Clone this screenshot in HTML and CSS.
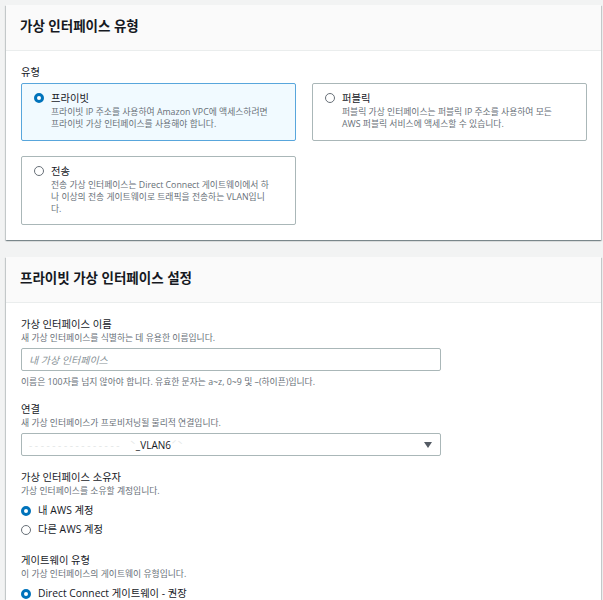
FILE: index.html
```html
<!DOCTYPE html>
<html lang="ko">
<head>
<meta charset="utf-8">
<title>가상 인터페이스</title>
<link rel="stylesheet" href="styles.css">
</head>
<body>
<div class="page">
  <section class="card">
    <div class="card-header"><h2>가상 인터페이스 유형</h2></div>
    <div class="card-body">
      <div class="label">유형</div>
      <div class="tiles">
        <div class="tile selected">
          <span class="radio on"></span>
          <div class="tile-text">
            <div class="tile-title">프라이빗</div>
            <div class="tile-desc">프라이빗 IP 주소를 사용하여 Amazon VPC에 액세스하려면<br>프라이빗 가상 인터페이스를 사용해야 합니다.</div>
          </div>
        </div>
        <div class="tile">
          <span class="radio"></span>
          <div class="tile-text">
            <div class="tile-title">퍼블릭</div>
            <div class="tile-desc">퍼블릭 가상 인터페이스는 퍼블릭 IP 주소를 사용하여 모든<br>AWS 퍼블릭 서비스에 액세스할 수 있습니다.</div>
          </div>
        </div>
        <div class="tile">
          <span class="radio"></span>
          <div class="tile-text">
            <div class="tile-title">전송</div>
            <div class="tile-desc">전송 가상 인터페이스는 Direct Connect 게이트웨이에서 하<br>나 이상의 전송 게이트웨이로 트래픽을 전송하는 VLAN입니<br>다.</div>
          </div>
        </div>
      </div>
    </div>
  </section>

  <section class="card">
    <div class="card-header"><h2>프라이빗 가상 인터페이스 설정</h2></div>
    <div class="card-body">
      <div class="field">
        <div class="label">가상 인터페이스 이름</div>
        <div class="desc">새 가상 인터페이스를 식별하는 데 유용한 이름입니다.</div>
        <div class="input"><span class="placeholder">내 가상 인터페이스</span></div>
        <div class="hint">이름은 100자를 넘지 않아야 합니다. 유효한 문자는 a~z, 0~9 및 –(하이픈)입니다.</div>
      </div>
      <div class="field">
        <div class="label">연결</div>
        <div class="desc">새 가상 인터페이스가 프로비저닝될 물리적 연결입니다.</div>
        <div class="select">
          <span class="value"><span class="masked">- - - - - - - - - - - - - - - -    ˋ</span>_VLAN6<span class="masked">ˊˋ</span></span>
          <span class="caret"></span>
        </div>
      </div>
      <div class="field">
        <div class="label">가상 인터페이스 소유자</div>
        <div class="desc">가상 인터페이스를 소유할 계정입니다.</div>
        <div class="options">
          <div class="option"><span class="radio on"></span>내 AWS 계정</div>
          <div class="option"><span class="radio"></span>다른 AWS 계정</div>
        </div>
      </div>
      <div class="field">
        <div class="label">게이트웨이 유형</div>
        <div class="desc">이 가상 인터페이스의 게이트웨이 유형입니다.</div>
        <div class="options">
          <div class="option"><span class="radio on"></span><span>Direct Connect 게이트웨이 - <em class="rec">권장</em></span></div>
        </div>
      </div>
    </div>
  </section>
</div>
</body>
</html>
```

FILE: styles.css
```css
html, body {
  margin: 0;
  padding: 0;
  background: #f2f3f3;
}
body {
  font-family: "Open Sans", "Noto Sans CJK KR", sans-serif;
  color: #16191f;
}
.page {
  padding: 5px 2px 0 6px;
  display: flex;
  flex-direction: column;
  gap: 17px;
}
.card {
  background: #fff;
  box-shadow: 0 1px 1px 0 rgba(0, 28, 36, .3), 1px 1px 1px 0 rgba(0, 28, 36, .15), -1px 1px 1px 0 rgba(0, 28, 36, .15);
}
.card-header {
  background: #fafafa;
  border-bottom: 1px solid #eaeded;
  padding: 12px 14px 15px;
}
.card-header h2 {
  margin: 0;
  font-size: 13.5px;
  line-height: 18px;
  font-weight: 700;
}
.card-body {
  padding: 14px 14px 15px 15px;
}
.label {
  font-size: 10.3px;
  line-height: 15px;
}
.desc, .hint {
  font-size: 8.8px;
  line-height: 12px;
  color: #687078;
}
.tiles {
  margin-top: 3px;
  display: grid;
  grid-template-columns: 275px 275px;
  column-gap: 16px;
  row-gap: 15px;
}
.tile {
  border: 1px solid #aab7b8;
  border-radius: 2px;
  padding: 6px 10px 9px 12px;
  display: flex;
  gap: 7px;
  align-items: flex-start;
}
.tile.selected {
  border-color: #58a6dc;
  background: #f1faff;
}
.tile .radio {
  margin-top: 3px;
}
.tile-title {
  font-size: 10.3px;
  line-height: 16px;
}
.tile-desc {
  font-size: 8.8px;
  line-height: 12.3px;
  color: #687078;
}
.radio {
  width: 10px;
  height: 10px;
  box-sizing: border-box;
  border-radius: 50%;
  border: 1px solid #687078;
  background: #fff;
  flex: none;
  display: inline-block;
}
.radio.on {
  border: 3px solid #0073bb;
}
.field {
  margin-bottom: 14px;
}
.input, .select {
  margin-top: 4px;
  width: 420px;
  height: 23px;
  box-sizing: border-box;
  border: 1px solid #aab7b8;
  border-radius: 2px;
  display: flex;
  align-items: center;
  padding: 0 7px;
}
.input {
  margin-bottom: 5px;
}
.placeholder {
  font-style: italic;
  font-size: 10px;
  color: #879196;
}
.select {
  justify-content: space-between;
}
.value {
  font-size: 10px;
  color: #16191f;
  white-space: pre;
}
.masked {
  color: #e3e6e6;
}
.caret {
  width: 0;
  height: 0;
  border-left: 4px solid transparent;
  border-right: 4px solid transparent;
  border-top: 6px solid #545b64;
  margin-right: 1px;
}
.options {
  margin-top: 4px;
}
.option {
  display: flex;
  align-items: center;
  gap: 7px;
  font-size: 10.3px;
  line-height: 19px;
}
.rec {
  font-style: oblique 10deg;
}
```
